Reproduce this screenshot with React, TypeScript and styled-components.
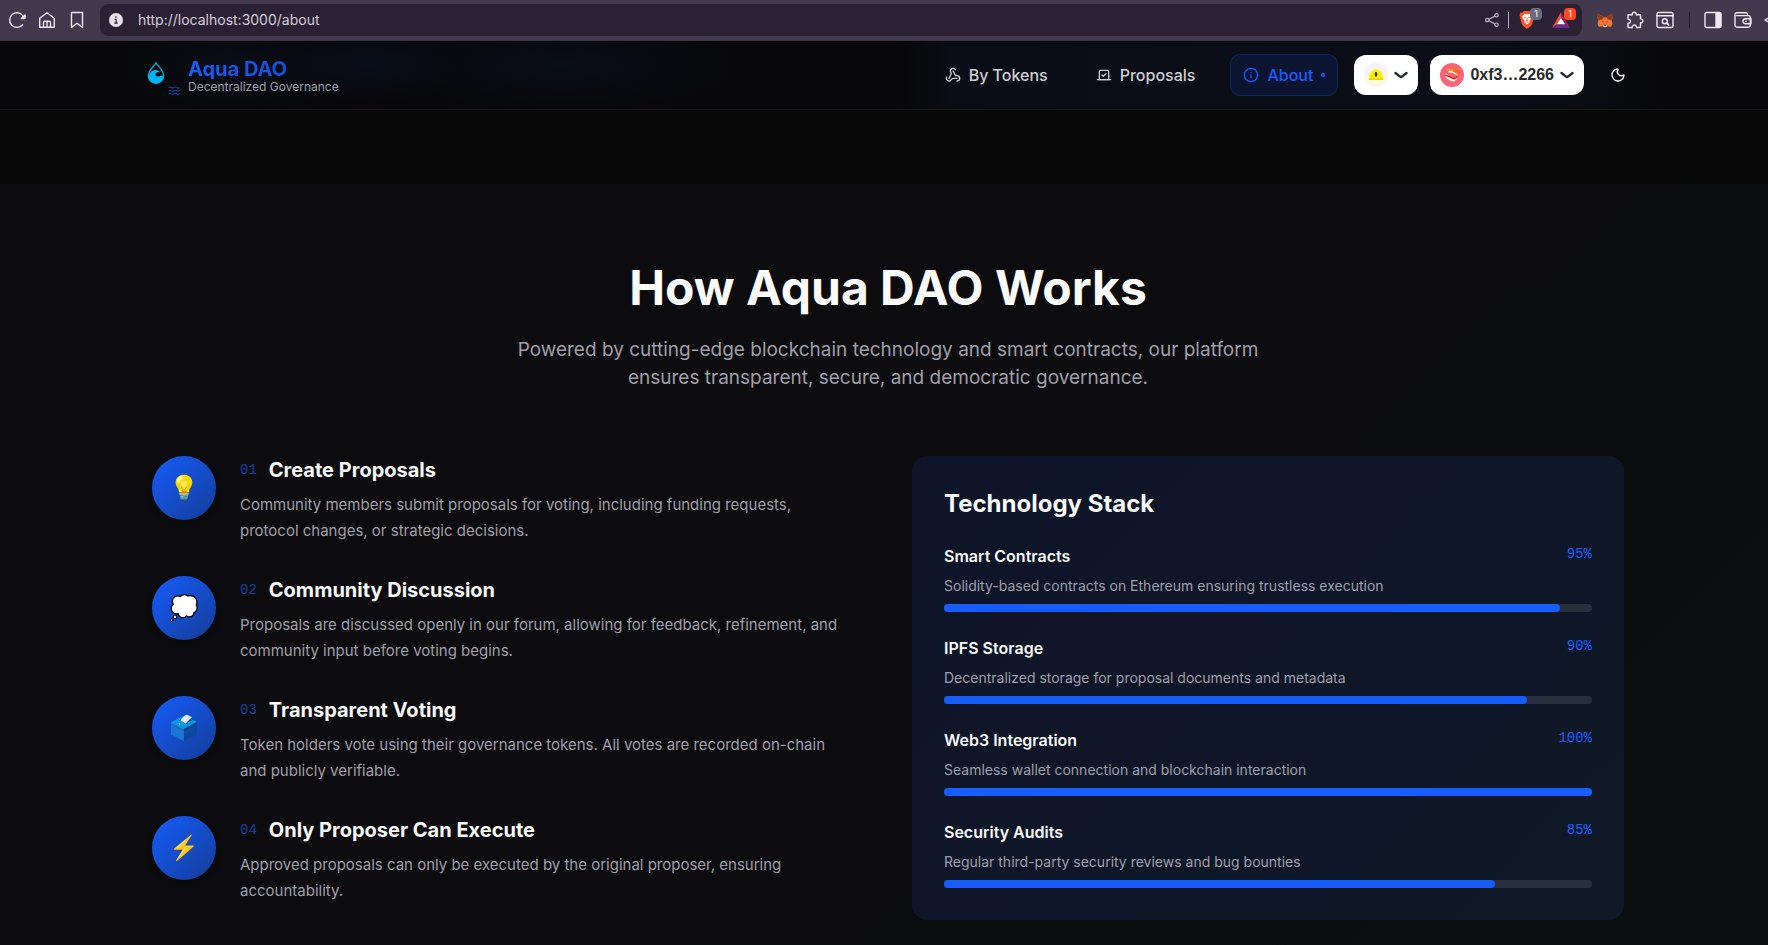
import React from "react";
import styled, { createGlobalStyle, css } from "styled-components";
import { Info, Moon, Vote, Webhook } from "lucide-react";

const GlobalStyle = createGlobalStyle`
  *, *::before, *::after { box-sizing: border-box; }
  body {
    margin: 0;
    background: #0c0c0e;
    color: #fafafa;
    font-family: Inter, "Noto Sans", sans-serif;
    font-size: 16px;
    line-height: 24px;
  }
  h1, h2, h3, h4, p, ol, ul { margin: 0; padding: 0; }
  ol, ul { list-style: none; }
  a { color: inherit; text-decoration: none; }
  button { border: 0; font: inherit; color: inherit; background: none; padding: 0; cursor: pointer; }
`;

const Screen = styled.div`
  min-height: 100vh;
  display: flex;
  flex-direction: column;
  overflow: hidden;
`;

/* Browser chrome */

const BrowserBar = styled.div`
  display: flex;
  align-items: center;
  height: 41px;
  padding-left: 2px;
  background: #43394e;
  border-bottom: 1px solid #39363d;
  color: #eee7f2;
`;

const ChromeButton = styled.button`
  display: flex;
  align-items: center;
  justify-content: center;
  flex: none;
  width: 30px;
  height: 32px;
`;

const AddressBar = styled.div`
  display: flex;
  align-items: center;
  flex: 1;
  min-width: 0;
  height: 32px;
  margin: 0 8px;
  padding: 0 4px 0 9px;
  border-radius: 8px;
  background: #2a2234;
`;

const AddressInput = styled.input`
  flex: 1;
  min-width: 0;
  margin-left: 15px;
  padding: 0;
  border: 0;
  outline: 0;
  background: none;
  color: #d5cdda;
  font: 400 14px/20px Inter, "Noto Sans", sans-serif;
`;

const ExtensionButton = styled(ChromeButton)`
  position: relative;
  width: 34px;
`;

const Badge = styled.span<{ $color: string }>`
  position: absolute;
  top: 4px;
  right: 2px;
  width: 12px;
  height: 12px;
  border-radius: 4px;
  background: ${(p) => p.$color};
  color: #fff;
  font-size: 9px;
  line-height: 12px;
  text-align: center;
`;

const Divider = styled.span<{ $color: string; $slot: number }>`
  display: flex;
  justify-content: center;
  flex: none;
  width: ${(p) => p.$slot}px;
  &::before {
    content: "";
    width: 1px;
    height: 16px;
    background: ${(p) => p.$color};
  }
`;

const ExtensionRow = styled.div`
  display: flex;
  align-items: center;
  flex: none;
  margin-right: -20px;
`;

/* Site header */

const Header = styled.header`
  padding-left: 8px;
  border-bottom: 1px solid #18181b;
  background:
    radial-gradient(ellipse 120px 50px at 240px 24px, #090d16 0%, transparent 100%),
    radial-gradient(ellipse 90px 40px at 370px 24px, #090e1a 0%, transparent 100%),
    radial-gradient(ellipse 180px 50px at 560px 24px, #090d17 0%, transparent 100%),
    linear-gradient(90deg, transparent 51%, #0a0d15 54%, #0b0e17 84%, #0a0c12 90%, transparent 94%),
    #08080a;
`;

const HeaderInner = styled.div`
  display: flex;
  align-items: center;
  justify-content: space-between;
  max-width: 1536px;
  height: 68px;
  margin: 0 auto;
  padding: 0 16px;
`;

const Brand = styled.a`
  display: flex;
  align-items: center;
  gap: 12px;
`;

const BrandMark = styled.span`
  position: relative;
  display: flex;
  justify-content: center;
  width: 40px;
  height: 40px;
  padding-top: 6px;
`;

const Ripples = styled.svg`
  position: absolute;
  right: -4px;
  bottom: 0;
`;

const BrandName = styled.span`
  display: block;
  background: linear-gradient(90deg, #155dfc, #1450d6);
  background-clip: text;
  color: transparent;
  font-size: 20px;
  font-weight: 700;
  line-height: 20px;
  justify-self: start;
`;

const BrandText = styled.span`
  display: grid;
  padding-top: 4px;
`;

const Tagline = styled.span`
  color: #9f9fa9;
  font-size: 12px;
  line-height: 16px;
`;

const HeaderActions = styled.div`
  display: flex;
  align-items: center;
  gap: 12px;
`;

const Nav = styled.nav`
  display: flex;
  gap: 22px;
  margin-right: 4px;
`;

const NavLink = styled.a<{ $active?: boolean }>`
  display: flex;
  align-items: center;
  gap: 8px;
  padding: 8px 12px;
  border: 1px solid transparent;
  border-radius: 10px;
  color: #cfcfd1;
  font-weight: 500;
  ${(p) =>
    p.$active &&
    css`
      border-color: #10275f;
      background: #0b1531;
      color: #155dfc;
      &::after {
        content: "";
        width: 4px;
        height: 4px;
        border-radius: 50%;
        background: #155dfc;
      }
    `}
`;

const WalletButton = styled.button`
  display: flex;
  align-items: center;
  gap: 6px;
  height: 40px;
  padding: 0 10px;
  border-radius: 12px;
  background: #fff;
  color: #25292e;
  font: 700 16px/20px "Liberation Sans", Arial, sans-serif;
`;

const Avatar = styled.span`
  display: flex;
  align-items: center;
  justify-content: center;
  width: 24px;
  height: 24px;
  border-radius: 50%;
  background: #ff6378;
  font-size: 13px;
  line-height: 24px;
`;

const ThemeButton = styled.button`
  display: flex;
  align-items: center;
  justify-content: center;
  width: 44px;
  height: 40px;
`;

/* Page content */

const HeroTail = styled.div`
  height: 74px;
  background: #080809;
`;

const Section = styled.section`
  flex: 1;
  padding: 80px 0 24px 8px;
  background: linear-gradient(135deg, #0c0c0f 0%, #0c0c0e 55%, #0c0e11 100%);
`;

const Container = styled.div`
  max-width: 1536px;
  margin: 0 auto;
  padding: 0 32px;
`;

const Intro = styled.div`
  max-width: 768px;
  margin: 0 auto 64px;
  text-align: center;
`;

const SectionTitle = styled.h2`
  margin-bottom: 24px;
  font-size: 48px;
  font-weight: 700;
  line-height: 48px;
`;

const Lead = styled.p`
  color: #9f9fa9;
  font-size: 19px;
  line-height: 28px;
`;

const Columns = styled.div`
  display: grid;
  grid-template-columns: 1fr 1fr;
  gap: 48px;
`;

const Steps = styled.ol`
  display: flex;
  flex-direction: column;
  gap: 32px;
`;

const Step = styled.li`
  display: flex;
  align-items: flex-start;
  gap: 24px;
`;

const StepIcon = styled.span`
  display: flex;
  align-items: center;
  justify-content: center;
  flex: none;
  width: 64px;
  height: 64px;
  border-radius: 50%;
  background: linear-gradient(135deg, #155dfc, #153c96);
  box-shadow: 0 4px 6px rgba(0, 0, 0, 0.2);
  font-size: 24px;
  line-height: 32px;
`;

const StepHeading = styled.div`
  display: flex;
  align-items: center;
  gap: 12px;
  margin-bottom: 8px;
`;

const StepNumber = styled.span`
  color: #153f9c;
  font: 400 14px/20px "Liberation Mono", monospace;
`;

const StepTitle = styled.h3`
  font-size: 20px;
  font-weight: 700;
  line-height: 28px;
`;

const StepText = styled.p`
  max-width: 608px;
  color: #9f9fa9;
  font-size: 15px;
  line-height: 26px;
`;

const StackCard = styled.div`
  padding: 32px;
  border-radius: 16px;
  background: linear-gradient(135deg, #0d1428, #0f1927);
`;

const StackTitle = styled.h3`
  margin-bottom: 24px;
  font-size: 24px;
  font-weight: 700;
  line-height: 32px;
`;

const StackList = styled.ul`
  display: flex;
  flex-direction: column;
  gap: 24px;
`;

const StackHead = styled.div`
  display: flex;
  align-items: flex-start;
  justify-content: space-between;
  margin-bottom: 8px;
`;

const StackName = styled.h4`
  font-size: 16px;
  font-weight: 600;
  line-height: 24px;
`;

const Percent = styled.span`
  color: #155dfc;
  font: 400 14px/20px "Liberation Mono", monospace;
`;

const StackText = styled.p`
  margin-bottom: 8px;
  color: #9f9fa9;
  font-size: 14px;
  line-height: 20px;
`;

const Track = styled.div`
  height: 8px;
  border-radius: 4px;
  background: #27303d;
`;

const Fill = styled.div`
  height: 8px;
  border-radius: 4px;
  background: #155dfc;
`;

const steps = [
  { icon: "💡", title: "Create Proposals", text: "Community members submit proposals for voting, including funding requests, protocol changes, or strategic decisions." },
  { icon: "💭", title: "Community Discussion", text: "Proposals are discussed openly in our forum, allowing for feedback, refinement, and community input before voting begins." },
  { icon: "🗳️", title: "Transparent Voting", text: "Token holders vote using their governance tokens. All votes are recorded on-chain and publicly verifiable." },
  { icon: "⚡", title: "Only Proposer Can Execute", text: "Approved proposals can only be executed by the original proposer, ensuring accountability." },
];

const stack = [
  { name: "Smart Contracts", value: 95, text: "Solidity-based contracts on Ethereum ensuring trustless execution" },
  { name: "IPFS Storage", value: 90, text: "Decentralized storage for proposal documents and metadata" },
  { name: "Web3 Integration", value: 100, text: "Seamless wallet connection and blockchain interaction" },
  { name: "Security Audits", value: 85, text: "Regular third-party security reviews and bug bounties" },
];

const Line = ({ children }: { children: React.ReactNode }) => (
  <svg width="18" height="18" viewBox="0 0 18 18" fill="none" stroke="currentColor" strokeWidth="1.4" strokeLinejoin="round" strokeLinecap="round" aria-hidden="true">
    {children}
  </svg>
);

const Chevron = () => (
  <svg width="14" height="8" viewBox="0 0 14 8" fill="none" stroke="currentColor" strokeWidth="2.4" strokeLinecap="round" strokeLinejoin="round" aria-hidden="true">
    <path d="M1.500 2 6 5.600q1 .7 2 0L12.500 2" />
  </svg>
);

function Browser() {
  return (
    <BrowserBar>
      <ChromeButton aria-label="Reload">
        <Line>
          <path d="M14.600 13.700A7.300 7.300 0 1 1 15.200 5.300" />
          <path d="M13.200 7.600h3.200a.6.6 0 0 0 .6-.6V4z" fill="currentColor" />
        </Line>
      </ChromeButton>
      <ChromeButton aria-label="Home">
        <Line>
          <path d="M1.700 7.200 9 1.700l7.300 5.500v9h-3.800v-4.600a1.400 1.400 0 0 0-1.400-1.400H6.900a1.400 1.400 0 0 0-1.400 1.400v4.600H1.700zM9 10.200v6M5.500 16.200h7" />
        </Line>
      </ChromeButton>
      <ChromeButton aria-label="Bookmark">
        <Line>
          <path d="M3.500 1.500h11v15L9 12.200l-5.500 4.300z" />
        </Line>
      </ChromeButton>
      <AddressBar>
        <svg width="14" height="14" viewBox="0 0 14 14" aria-hidden="true">
          <circle cx="7" cy="7" r="7" fill="#e6dfea" />
          <path d="M5.700 6.300h1.400v3.900M5.300 10.200h3.400M6.900 3.300v1.500" stroke="#2a2234" strokeWidth="1.300" fill="none" />
        </svg>
        <AddressInput aria-label="Address" defaultValue="http://localhost:3000/about" />
        <ChromeButton aria-label="Share">
          <svg width="14" height="14" viewBox="0 0 14 14" fill="none" stroke="#bdb4c4" strokeWidth="1.200" aria-hidden="true">
            <circle cx="2.300" cy="7" r="1.700" />
            <circle cx="11.500" cy="2.300" r="1.700" />
            <circle cx="11.500" cy="11.700" r="1.700" />
            <path d="m3.900 6.200 6-3.100M3.900 7.800l6 3.100" />
          </svg>
        </ChromeButton>
        <Divider $color="#b4abbb" $slot={3} />
        <ExtensionButton aria-label="Shields, 1 blocked">
          <svg width="16" height="18" viewBox="0 0 16 18" aria-hidden="true">
            <path d="M4.800 0h6.400l1.600 1.700 1.800-.2 1 2.700-.6 1.500-1.800 7.400c-.3 1-1 1.600-1.800 2.200L8 18l-3.400-2.700c-.8-.6-1.500-1.200-1.800-2.200L1 5.700l-.6-1.500 1-2.700 1.800.2z" fill="#fb542b" />
            <path d="m8 3.200 2.500-.5 2.300 2.700-.6 2.200-1.900 2 .4 1.600L8 13.500l-2.700-2.300.4-1.600-1.900-2-.6-2.200 2.300-2.700z" fill="#fff" />
            <path d="M5 6.200 7 7M11 6.200 9 7M8 7v2.700M6.400 10.300 8 9.700l1.600.6M8 10.800v1.200" stroke="#fb542b" strokeWidth=".9" fill="none" />
          </svg>
          <Badge $color="#6b6d7b">1</Badge>
        </ExtensionButton>
        <ExtensionButton aria-label="Rewards, 1 new">
          <svg width="18" height="16" viewBox="0 0 18 16" aria-hidden="true">
            <path d="M9 0v5.800L5 12.300 0 16z" fill="#ff4724" />
            <path d="M9 0v5.800l4 6.500 5 3.700z" fill="#9e1f63" />
            <path d="M0 16h18l-5-3.700H5z" fill="#662d91" />
            <path d="m9 5.800 4 6.500H5z" fill="#fff" />
          </svg>
          <Badge $color="#ff4724">1</Badge>
        </ExtensionButton>
      </AddressBar>
      <ExtensionRow>
        <ChromeButton aria-label="Fox wallet">
          <svg width="16" height="15" viewBox="0 0 34 32" aria-hidden="true">
            <path d="M2 1 14 9h6L32 1l1 9-2 6 2 7-3 7-8-2-4 3h-2l-4-3-8 2-3-7 2-7-2-6z" fill="#f5742a" />
            <path d="M2 1 14 9l-3 5-8 1-2-5zM32 1 20 9l3 5 8 1 2-5z" fill="#8e3c1b" />
            <path d="m2 18 9-3 3 7-9 2zM32 18l-9-3-3 7 9 2z" fill="#ff7a3a" />
            <path d="M10 17l4 2-1 2zM24 17l-4 2 1 2z" fill="#26323b" />
            <path d="m13 26 4-1 4 1-1 4h-6z" fill="#d9cfc8" />
            <path d="M14 25h6l-1 2h-4z" fill="#26323b" />
          </svg>
        </ChromeButton>
        <ChromeButton aria-label="Extensions">
          <Line>
            <path d="M2 3.700h4.300c-.5-3.300 4.300-3.300 3.900 0h4.300v4.200c3.300-.4 3.300 4.300 0 3.900v4.700h-4c.2-3.300-4.500-3.300-4.200 0H2v-4.300c3.200.3 3.200-4.300 0-4z" />
          </Line>
        </ChromeButton>
        <ChromeButton aria-label="Search tabs">
          <Line>
            <rect x="1" y="1.500" width="16" height="15" rx="1.500" />
            <path d="M1 4.800h16" />
            <circle cx="8.800" cy="10.200" r="2.500" />
            <path d="m10.800 12.200 1.800 1.800" strokeWidth="1.800" />
          </Line>
        </ChromeButton>
        <Divider $color="#221b2b" $slot={18} />
        <ChromeButton aria-label="Side panel">
          <Line>
            <rect x="1" y="1.500" width="16" height="15" rx="1.500" />
            <path d="M12 2h4.500v14H12z" fill="currentColor" />
          </Line>
        </ChromeButton>
        <ChromeButton aria-label="Wallet">
          <Line>
            <path d="M13.500 4.500V3.700a2 2 0 0 0-2-2H3a2 2 0 0 0-2 2V14a2.300 2.300 0 0 0 2.300 2.300H14a2.300 2.300 0 0 0 2.300-2.300V6.600a2 2 0 0 0-2-2H2.500" />
            <path d="M17 7.800h-5.500a2.500 2.500 0 0 0 0 5H17zM11.800 10.300h.4" />
          </Line>
        </ChromeButton>
        <ChromeButton aria-label="Assistant">
          <Line>
            <path d="M6 6 1 9l5 3 3-9z" />
          </Line>
        </ChromeButton>
      </ExtensionRow>
    </BrowserBar>
  );
}

function SiteHeader() {
  return (
    <Header>
      <HeaderInner>
        <Brand href="#home">
          <BrandMark>
            <svg width="18" height="24" viewBox="0 0 18 24" aria-hidden="true">
              <path d="M9 1.800C6.600 5.600 1.400 9.800 1.400 14.700a7.600 7.600 0 0 0 15.200 0C16.600 9.800 11.400 5.600 9 1.800z" fill="none" stroke="#0aa2c0" strokeWidth="1.500" />
              <path d="M1.400 15.200C2.600 11.200 5.800 8.600 9 8.900c2.300.2 3.600 1.400 3.800 2.900-1.700-.9-4-.4-4.300 1.400-.4 2.700 4.300 3 8 .5-.1 5.600-3.200 8.600-7.500 8.600s-7.300-3-7.600-7.100z" fill="#04b2f8" />
            </svg>
            <Ripples width="12" height="9" viewBox="0 0 12 9" fill="none" stroke="#143f9f" strokeWidth="1.100" strokeLinecap="round" aria-hidden="true">
              <path d="M.8 1.500q1.300-1 2.600 0t2.600 0 2.600 0 2.600 0M.8 4.700q1.300-1 2.600 0t2.600 0 2.600 0 2.600 0M.8 7.900q1.300-1 2.600 0t2.600 0 2.600 0 2.600 0" />
            </Ripples>
          </BrandMark>
          <BrandText>
            <BrandName>Aqua DAO</BrandName>
            <Tagline>Decentralized Governance</Tagline>
          </BrandText>
        </Brand>
        <HeaderActions>
          <Nav>
            <NavLink href="#tokens"><Webhook size={16} />By Tokens</NavLink>
            <NavLink href="#proposals"><Vote size={16} />Proposals</NavLink>
            <NavLink href="#about" $active aria-current="page"><Info size={16} />About</NavLink>
          </Nav>
          <WalletButton aria-label="Switch network">
            <svg width="24" height="24" viewBox="0 0 24 24" aria-hidden="true">
              <defs>
                <linearGradient id="chain" x1="0" y1="0" x2="0" y2="1">
                  <stop offset="0" stopColor="#f6effc" />
                  <stop offset="1" stopColor="#fbfbdc" />
                </linearGradient>
              </defs>
              <circle cx="12" cy="12" r="12" fill="url(#chain)" />
              <path d="M5 16.500C5 10 8 6.300 12 6.300s7 3.700 7 10.200q0 .5-.6.5H5.600q-.6 0-.6-.5z" fill="#fff100" />
              <path d="M5 15.500h14v1q0 .5-.6.5H5.600q-.6 0-.6-.5z" fill="#e8d600" />
              <ellipse cx="12" cy="11.300" rx="1.300" ry="2.500" fill="#3a3a12" />
            </svg>
            <Chevron />
          </WalletButton>
          <WalletButton>
            <Avatar aria-hidden="true">🍣</Avatar>
            0xf3…2266
            <Chevron />
          </WalletButton>
          <ThemeButton aria-label="Toggle theme"><Moon size={16} /></ThemeButton>
        </HeaderActions>
      </HeaderInner>
    </Header>
  );
}

export default function App() {
  return (
    <Screen>
      <GlobalStyle />
      <Browser />
      <SiteHeader />
      <HeroTail />
      <Section>
        <Container>
          <Intro>
            <SectionTitle>How Aqua DAO Works</SectionTitle>
            <Lead>
              Powered by cutting-edge blockchain technology and smart contracts, our platform ensures transparent, secure, and democratic governance.
            </Lead>
          </Intro>
          <Columns>
            <Steps>
              {steps.map((s, i) => (
                <Step key={s.title}>
                  <StepIcon aria-hidden="true">{s.icon}</StepIcon>
                  <div>
                    <StepHeading>
                      <StepNumber>{`0${i + 1}`}</StepNumber>
                      <StepTitle>{s.title}</StepTitle>
                    </StepHeading>
                    <StepText>{s.text}</StepText>
                  </div>
                </Step>
              ))}
            </Steps>
            <StackCard>
              <StackTitle>Technology Stack</StackTitle>
              <StackList>
                {stack.map((t) => (
                  <li key={t.name}>
                    <StackHead>
                      <StackName>{t.name}</StackName>
                      <Percent>{t.value}%</Percent>
                    </StackHead>
                    <StackText>{t.text}</StackText>
                    <Track role="progressbar" aria-label={t.name} aria-valuenow={t.value} aria-valuemin={0} aria-valuemax={100}>
                      <Fill style={{ width: `${t.value}%` }} />
                    </Track>
                  </li>
                ))}
              </StackList>
            </StackCard>
          </Columns>
        </Container>
      </Section>
    </Screen>
  );
}
